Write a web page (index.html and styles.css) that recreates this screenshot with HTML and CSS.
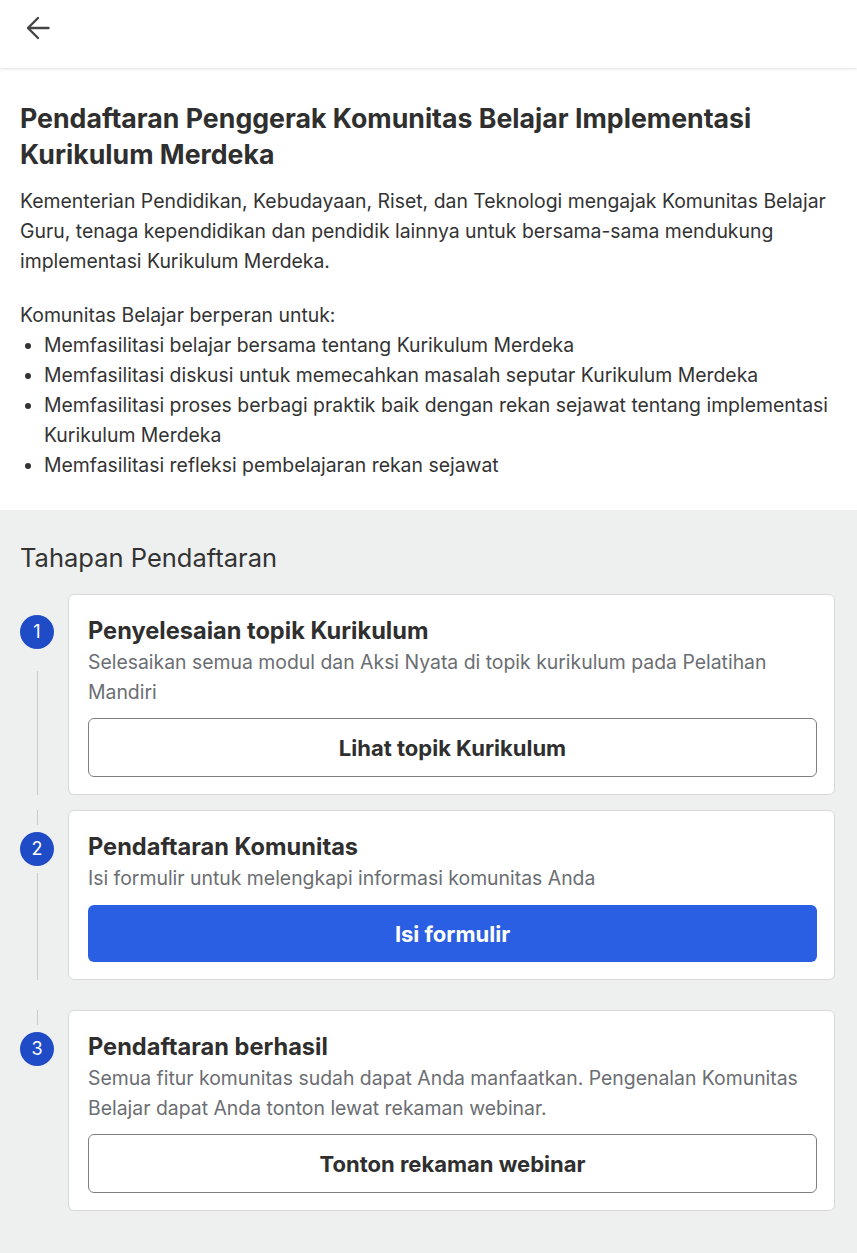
FILE: index.html
```html
<!DOCTYPE html>
<html lang="id">
<head>
    <meta charset="UTF-8">
    <meta name="viewport" content="width=device-width, initial-scale=1.0">
    <title>Pendaftaran Penggerak Komunitas Belajar</title>
    <link rel="stylesheet" href="styles.css">
</head>
<body>
    <header class="topbar">
        <button class="back-btn" aria-label="Kembali">
            <svg width="24" height="24" viewBox="0 0 24 24" fill="none" stroke="#444" stroke-width="2.4" stroke-linecap="round" stroke-linejoin="round">
                <path d="M22.5 12H2.5"/>
                <path d="M12 2L2 12l10 10"/>
            </svg>
        </button>
    </header>

    <section class="intro">
        <h1>Pendaftaran Penggerak Komunitas Belajar Implementasi Kurikulum Merdeka</h1>
        <p>Kementerian Pendidikan, Kebudayaan, Riset, dan Teknologi mengajak Komunitas Belajar Guru, tenaga kependidikan dan pendidik lainnya untuk bersama-sama mendukung implementasi Kurikulum Merdeka.</p>
        <p class="list-title">Komunitas Belajar berperan untuk:</p>
        <ul>
            <li>Memfasilitasi belajar bersama tentang Kurikulum Merdeka</li>
            <li>Memfasilitasi diskusi untuk memecahkan masalah seputar Kurikulum Merdeka</li>
            <li>Memfasilitasi proses berbagi praktik baik dengan rekan sejawat tentang implementasi Kurikulum Merdeka</li>
            <li>Memfasilitasi refleksi pembelajaran rekan sejawat</li>
        </ul>
    </section>

    <section class="steps">
        <h2>Tahapan Pendaftaran</h2>

        <div class="step step-first">
            <div class="marker">
                <span class="circle">1</span>
                <span class="line"></span>
            </div>
            <div class="card">
                <h3>Penyelesaian topik Kurikulum</h3>
                <p>Selesaikan semua modul dan Aksi Nyata di topik kurikulum pada Pelatihan Mandiri</p>
                <button class="btn btn-outline">Lihat topik Kurikulum</button>
            </div>
        </div>

        <div class="step step-mid">
            <div class="marker">
                <span class="line-top"></span>
                <span class="circle">2</span>
                <span class="line"></span>
            </div>
            <div class="card">
                <h3>Pendaftaran Komunitas</h3>
                <p>Isi formulir untuk melengkapi informasi komunitas Anda</p>
                <button class="btn btn-primary">Isi formulir</button>
            </div>
        </div>

        <div class="step step-last">
            <div class="marker">
                <span class="line-top"></span>
                <span class="circle">3</span>
            </div>
            <div class="card">
                <h3>Pendaftaran berhasil</h3>
                <p>Semua fitur komunitas sudah dapat Anda manfaatkan. Pengenalan Komunitas Belajar dapat Anda tonton lewat rekaman webinar.</p>
                <button class="btn btn-outline">Tonton rekaman webinar</button>
            </div>
        </div>
    </section>
</body>
</html>
```

FILE: styles.css
```css
body {
    font-family: Inter, 'Noto Sans', sans-serif;
    margin: 0;
    padding: 0;
    color: #333;
    font-size: 19.4px;
    line-height: 30px;
    background: #eef0f0;
}
.topbar {
    height: 68px;
    background: #fff;
    box-shadow: 0 1px 3px rgba(0, 0, 0, 0.12);
    display: flex;
    align-items: center;
    padding-left: 26px;
    position: relative;
}
.back-btn {
    border: none;
    background: none;
    padding: 0;
    margin-top: -12px;
    display: flex;
    cursor: pointer;
}
.intro {
    background: #fff;
    padding: 32px 20px 30px;
}
h1 {
    font-size: 26.7px;
    line-height: 36px;
    font-weight: 700;
    margin: 0 0 14px;
    color: #2f2f2f;
}
.intro p {
    margin: 0 0 24px;
}
.intro .list-title {
    margin: 0;
}
.intro ul {
    margin: 0;
    padding-left: 24px;
}
.steps {
    padding: 30px 22px 42px 20px;
}
h2 {
    font-size: 25.5px;
    line-height: 36px;
    font-weight: 400;
    margin: 0 0 18px;
    color: #333;
}
.step {
    display: flex;
    gap: 14px;
}
.step-first {
    padding-bottom: 15px;
}
.step-mid {
    padding-bottom: 30px;
}
.marker {
    width: 34px;
    flex-shrink: 0;
    display: flex;
    flex-direction: column;
    align-items: center;
    padding-top: 21px;
}
.step-mid .marker,
.step-last .marker {
    padding-top: 0;
}
.circle {
    width: 34px;
    height: 34px;
    border-radius: 50%;
    background: #1f4bc7;
    color: #fff;
    font-size: 18px;
    line-height: 34px;
    text-align: center;
    flex-shrink: 0;
}
.line {
    flex: 1;
    width: 1px;
    background: #c9cccf;
    margin-top: 7px;
}
.step-first .line {
    margin-top: 22px;
}
.line-top {
    width: 1px;
    height: 15px;
    margin-bottom: 7px;
    background: #c9cccf;
}
.card {
    flex: 1;
    background: #fff;
    border: 1px solid #d6d8da;
    border-radius: 6px;
    padding: 20px 17px 17px 19px;
}
.card h3 {
    font-size: 23.6px;
    line-height: 32px;
    font-weight: 700;
    margin: 0;
    color: #2f2f2f;
}
.card p {
    margin: 0;
    color: #6b6e72;
}
.btn {
    display: block;
    width: 100%;
    height: 59px;
    margin-top: 11px;
    border-radius: 6px;
    font-family: inherit;
    font-size: 22px;
    font-weight: 700;
    cursor: pointer;
}
.btn-outline {
    background: #fff;
    border: 1px solid #7c7f83;
    color: #2f2f2f;
}
.btn-primary {
    height: 57px;
    margin-top: 12px;
    background: #2b5fe3;
    border: none;
    color: #fff;
}
```
